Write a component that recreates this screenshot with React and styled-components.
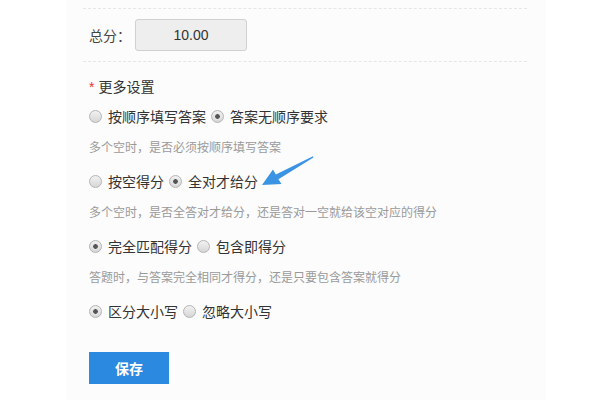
import React, { useState } from 'react';
import styled, { createGlobalStyle } from 'styled-components';

const GlobalStyle = createGlobalStyle`
  html, body {
    margin: 0;
    padding: 0;
    background: #ffffff;
    font-family: "Liberation Sans", "Noto Sans CJK SC", sans-serif;
  }
`

const Page = styled.div`
  display: flex;
  height: 400px;
  overflow: hidden;
  padding-left: 66px;
`

const Panel = styled.div`
  position: relative;
  width: 480px;
  background: #fcfcfc;
  padding: 8px 19px 0 17px;
  box-sizing: border-box;
`

const ScoreRow = styled.div`
  display: flex;
  align-items: center;
  height: 52px;
  padding-left: 6px;
  border-top: 1px dashed #e6e6e6;
  border-bottom: 1px dashed #e6e6e6;
`

const ScoreLabel = styled.span`
  font-size: 14px;
  color: #444;
  width: 46px;
`

const ScoreInput = styled.div`
  width: 110px;
  height: 30px;
  border: 1px solid #d0d0d0;
  border-radius: 3px;
  background: #eeeeee;
  display: flex;
  align-items: center;
  justify-content: center;
  font-size: 14px;
  color: #333;
`

const Settings = styled.div`
  padding-left: 6px;
`

const SectionTitle = styled.div`
  margin-top: 15px;
  font-size: 14px;
  line-height: 20px;
  color: #333;
`

const Star = styled.span`
  color: #e33;
  margin-right: 4px;
`

const RadioRow = styled.div`
  display: flex;
  align-items: center;
  height: 20px;
  margin-top: ${p => p.$top}px;
`

const Option = styled.label`
  display: flex;
  align-items: center;
  font-size: 14px;
  color: #333;
  margin-right: 5px;
  cursor: pointer;
`

const Dot = styled.span`
  position: relative;
  width: 11px;
  height: 11px;
  border-radius: 50%;
  border: 1px solid #b4b4b4;
  background: linear-gradient(#f2f2f2, #d6d6d6);
  margin-right: 6px;
  box-sizing: content-box;
  &::after {
    content: '';
    display: ${p => (p.$on ? 'block' : 'none')};
    position: absolute;
    left: 2px;
    top: 2px;
    width: 5px;
    height: 5px;
    border-radius: 50%;
    background: #555;
    border: 1px solid #fff;
  }
`

const Help = styled.div`
  margin-top: 13px;
  font-size: 12px;
  line-height: 18px;
  color: #9a9a9a;
`

const SaveButton = styled.button`
  margin-top: 31px;
  width: 80px;
  height: 32px;
  border: none;
  background: #2b8ae0;
  color: #fff;
  font-size: 14px;
  font-weight: bold;
  font-family: inherit;
`

const Arrow = styled.svg`
  position: absolute;
  left: 189px;
  top: 152px;
`

const groups = [
  { name: 'order', options: ['按顺序填写答案', '答案无顺序要求'], help: '多个空时，是否必须按顺序填写答案', value: 1 },
  { name: 'score', options: ['按空得分', '全对才给分'], help: '多个空时，是否全答对才给分，还是答对一空就给该空对应的得分', value: 1 },
  { name: 'match', options: ['完全匹配得分', '包含即得分'], help: '答题时，与答案完全相同才得分，还是只要包含答案就得分', value: 0 },
  { name: 'case', options: ['区分大小写', '忽略大小写'], value: 0 },
];

const App = () => {
  const [values, setValues] = useState(groups.map(g => g.value));

  const pick = (gi, oi) => {
    setValues(values.map((v, i) => (i === gi ? oi : v)));
  };

  return (
    <>
      <GlobalStyle />
      <Page>
        <Panel>
          <ScoreRow>
            <ScoreLabel>总分：</ScoreLabel>
            <ScoreInput>10.00</ScoreInput>
          </ScoreRow>
          <Settings>
            <SectionTitle><Star>*</Star>更多设置</SectionTitle>
            {groups.map((g, gi) => (
              <React.Fragment key={g.name}>
                <RadioRow $top={gi === 0 ? 9 : 14}>
                  {g.options.map((o, oi) => (
                    <Option key={o} onClick={() => pick(gi, oi)}>
                      <Dot $on={values[gi] === oi} />
                      {o}
                    </Option>
                  ))}
                </RadioRow>
                {g.help && <Help>{g.help}</Help>}
              </React.Fragment>
            ))}
            <SaveButton>保存</SaveButton>
          </Settings>
          <Arrow width="62" height="40" viewBox="0 0 62 40">
            <polygon
              points="7,33 18,17.5 20.8,22.4 58,4.3 58.4,5.6 23.4,27.2 26.5,32"
              fill="#3a93e3"
            />
          </Arrow>
        </Panel>
      </Page>
    </>
  );
}

export default App;
